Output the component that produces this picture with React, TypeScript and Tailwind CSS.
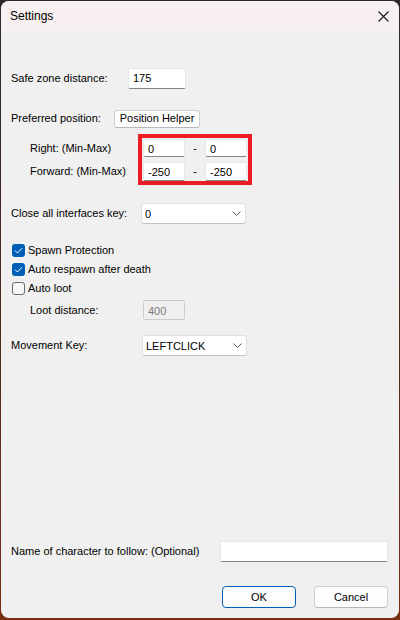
import type { ReactNode } from "react";

const font = "font-['Liberation_Sans',Arial,sans-serif]";

function TextBox({ value, className }: { value: string; className: string }) {
  return (
    <div
      className={`bg-white border border-[#e6e6e6] border-b-[#868686] rounded-[2px] pl-[4px] text-[11px] leading-[16px] pt-px text-black ${className}`}
    >
      {value}
    </div>
  );
}

function Chevron() {
  return (
    <svg width="9" height="5" viewBox="0 0 9 5" className="shrink-0">
      <path d="M0.5 0.5 L4.5 4.5 L8.5 0.5" fill="none" stroke="#505050" strokeWidth="1" />
    </svg>
  );
}

function Select({ value, className }: { value: string; className: string }) {
  return (
    <div
      className={`flex items-center justify-between bg-white border border-[#e0e0e0] border-b-[#c4c4c4] rounded-[3px] pl-[3px] pr-[4px] text-[11px] ${className}`}
    >
      <span className="pt-px">{value}</span>
      <Chevron />
    </div>
  );
}

function CheckRow({ checked, children }: { checked: boolean; children: ReactNode }) {
  return (
    <div className="flex items-center h-[19px] pl-px">
      {checked ? (
        <div className="w-[13px] h-[13px] rounded-[3px] bg-[#005fb8] flex items-center justify-center">
          <svg width="9" height="7" viewBox="0 0 9 7">
            <path d="M1 3.6 L3.4 6 L8 1.2" fill="none" stroke="#ffffff" strokeWidth="1" />
          </svg>
        </div>
      ) : (
        <div className="w-[13px] h-[13px] rounded-[3px] border border-[#6b6b6b] bg-[#f7f7f7]" />
      )}
      <span className="ml-[3px]">{children}</span>
    </div>
  );
}

export default function App() {
  return (
    <div
      className={`w-[400px] h-[620px] bg-gradient-to-b from-[#2a2a2a] via-[#4a2a20] to-[#7a2e14] pl-px pt-px ${font} text-[11px] text-black`}
    >
      <div className="w-[398px] h-[617px] rounded-[8px] bg-[#f0f0f0] overflow-hidden flex flex-col">
        {/* Title bar */}
        <div className="h-[30px] bg-[#f8f0f0] flex items-center justify-between pl-[9px] pr-[9px] shrink-0">
          <span className="text-[12px]">Settings</span>
          <svg width="11" height="11" viewBox="0 0 11 11" className="mr-[1px]">
            <path d="M0.5 0.5 L10.5 10.5 M10.5 0.5 L0.5 10.5" stroke="#1a1a1a" strokeWidth="1.1" />
          </svg>
        </div>

        <div className="pl-[10px] flex flex-col">
          {/* Safe zone */}
          <div className="flex items-center mt-[37px] h-[21px]">
            <span className="w-[117px]">Safe zone distance:</span>
            <TextBox value="175" className="w-[58px] h-[21px]" />
          </div>

          {/* Preferred position */}
          <div className="flex items-center mt-[21px] h-[17px]">
            <span className="w-[103px]">Preferred position:</span>
            <div className="w-[86px] h-[18px] bg-[#fdfdfd] border border-[#d0d0d0] border-b-[#b8b8b8] rounded-[3px] flex items-center justify-center">
              Position Helper
            </div>
          </div>

          {/* Min-max */}
          <div className="flex mt-[7px]">
            <div className="w-[127px] pl-[19px] pt-[4px] flex flex-col">
              <span className="h-[18px] flex items-center mt-px">Right: (Min-Max)</span>
              <span className="h-[19px] flex items-center mt-[5px]">Forward: (Min-Max)</span>
            </div>
            <div className="border-[4px] border-[#ec1c24] w-[114px] h-[51px] p-px flex flex-col gap-[5px] bg-[#f0f0f0]">
              <div className="flex items-center h-[18px]">
                <TextBox value="0" className="w-[42px] h-[18px]" />
                <span className="w-[20px] text-center">-</span>
                <TextBox value="0" className="w-[42px] h-[18px]" />
              </div>
              <div className="flex items-center h-[19px]">
                <TextBox value="-250" className="w-[42px] h-[19px] pt-[2px]" />
                <span className="w-[20px] text-center">-</span>
                <TextBox value="-250" className="w-[42px] h-[19px] pt-[2px]" />
              </div>
            </div>
          </div>

          {/* Close all interfaces key */}
          <div className="flex items-center mt-[18px] h-[21px]">
            <span className="w-[130px]">Close all interfaces key:</span>
            <Select value="0" className="w-[105px] h-[21px]" />
          </div>

          {/* Checkboxes */}
          <div className="flex flex-col mt-[17px]">
            <CheckRow checked>Spawn Protection</CheckRow>
            <CheckRow checked>Auto respawn after death</CheckRow>
            <CheckRow checked={false}>Auto loot</CheckRow>
          </div>

          {/* Loot distance */}
          <div className="flex items-center mt-[2px] h-[20px]">
            <span className="w-[132px] pl-[19px]">Loot distance:</span>
            <div className="w-[42px] h-[20px] border border-[#cccccc] bg-[#f0f0f0] text-[#7a7a7a] pl-[4px] pt-[2px] rounded-[2px]">
              400
            </div>
          </div>

          {/* Movement key */}
          <div className="flex items-center mt-[15px] h-[21px]">
            <span className="w-[131px]">Movement Key:</span>
            <Select value="LEFTCLICK" className="w-[105px] h-[21px]" />
          </div>

          {/* Follow */}
          <div className="flex items-center mt-[185px] h-[21px]">
            <span className="w-[209px]">Name of character to follow: (Optional)</span>
            <TextBox value="" className="w-[168px] h-[21px]" />
          </div>

          {/* Buttons */}
          <div className="flex justify-end gap-[18px] mt-[24px] pr-[11px]">
            <div className="w-[74px] h-[22px] rounded-[4px] bg-[#fdfdfd] border border-[#005fb8] flex items-center justify-center">
              OK
            </div>
            <div className="w-[74px] h-[22px] rounded-[4px] bg-[#fdfdfd] border border-[#d0d0d0] border-b-[#b8b8b8] flex items-center justify-center">
              Cancel
            </div>
          </div>
        </div>
      </div>
    </div>
  );
}
